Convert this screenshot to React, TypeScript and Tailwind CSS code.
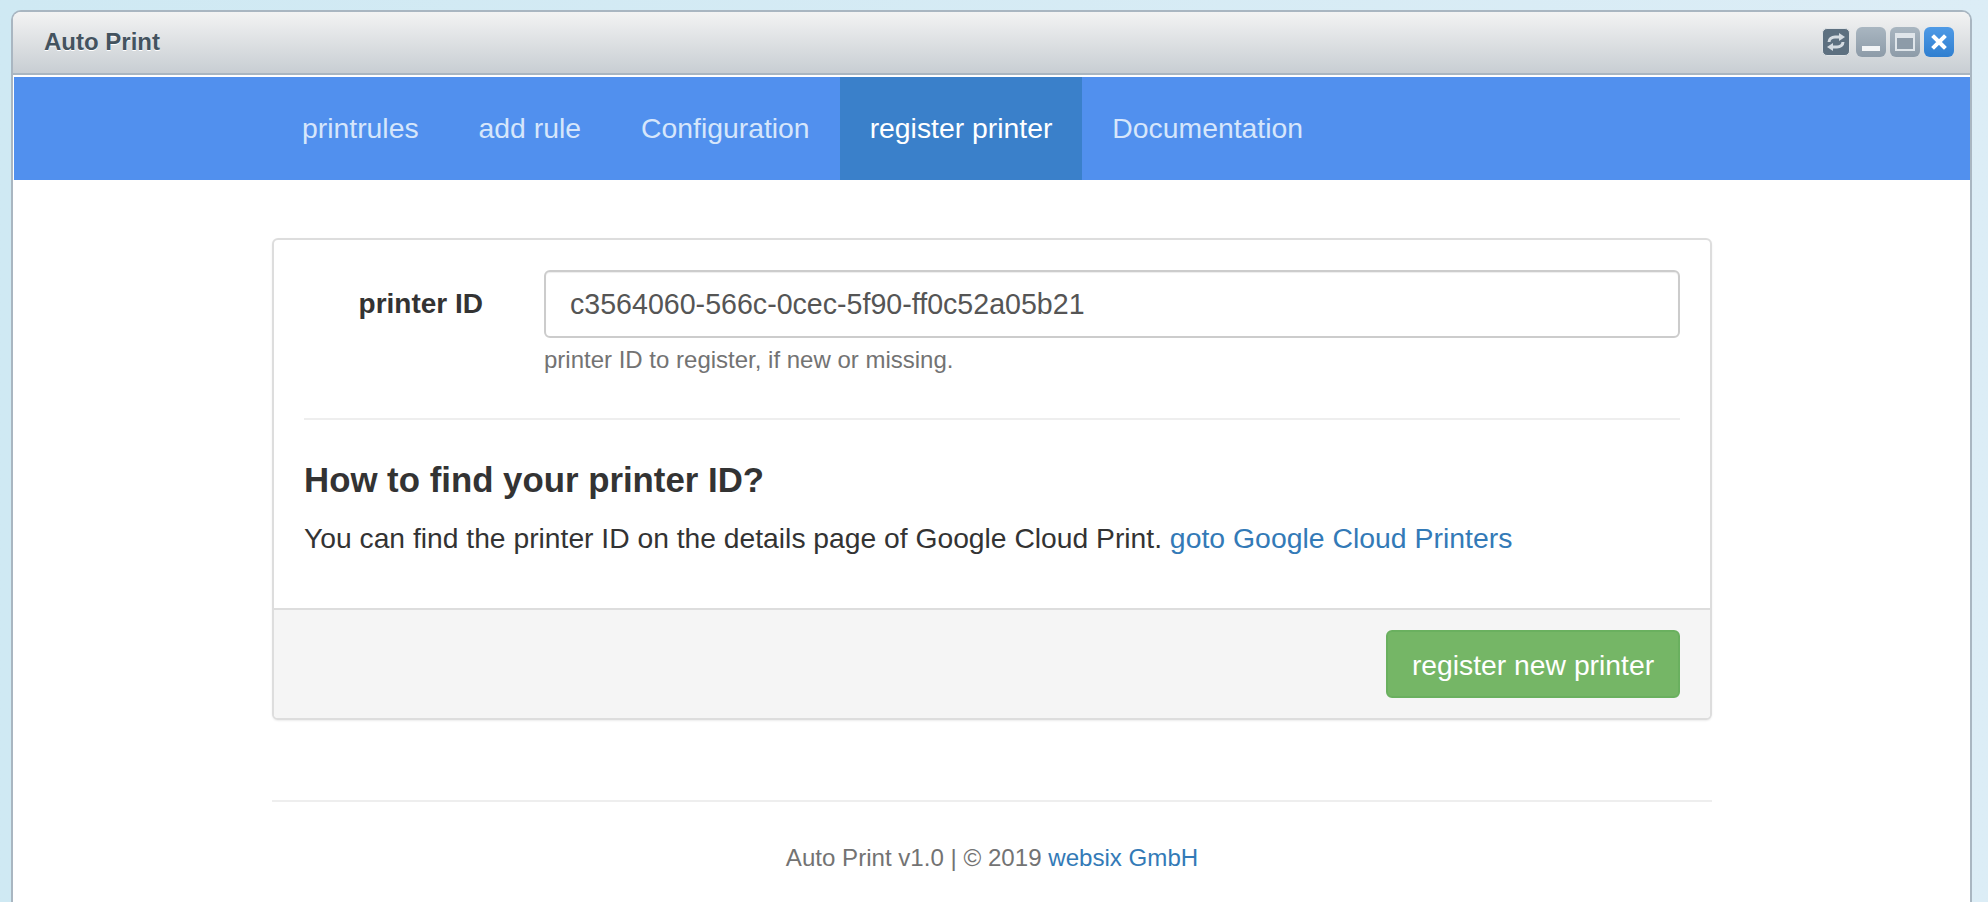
const sans = { fontFamily: '"Liberation Sans", Arial, sans-serif' };

const tabs = ["printrules", "add rule", "Configuration", "register printer", "Documentation"];

function Icons() {
  return (
    <div className="flex items-center gap-[4px]">
      <div className="mr-[2px] flex h-[28px] w-[28px] items-center justify-center rounded-[5px] border border-[#dfe3e6] bg-[#5d7080]">
        <svg width="22" height="22" viewBox="0 0 22 22" fill="none" stroke="#d5dce2" strokeWidth="3">
          <path d="M4 11 A6 5 0 0 1 10 6 H15" />
          <path d="M14 2 L20 6 L14 10 Z" fill="#d5dce2" stroke="none" />
          <path d="M18 11 A6 5 0 0 1 12 16 H7" />
          <path d="M8 12 L2 16 L8 20 Z" fill="#d5dce2" stroke="none" />
        </svg>
      </div>
      <div className="flex h-[30px] w-[30px] items-end justify-center rounded-[6px] bg-gradient-to-b from-[#a9b6c1] to-[#8d9ba8] pb-[6px]">
        <div className="h-[5px] w-[18px] bg-[#f2f4f6]" />
      </div>
      <div className="flex h-[30px] w-[30px] items-center justify-center rounded-[6px] bg-gradient-to-b from-[#a9b6c1] to-[#8d9ba8]">
        <div className="h-[18px] w-[20px] border-[2px] border-t-[5px] border-[#dfe5ea] bg-[#8d9ba8]" />
      </div>
      <div className="flex h-[30px] w-[30px] items-center justify-center rounded-[6px] bg-gradient-to-b from-[#4f9ae6] to-[#2f7fd0]">
        <svg width="18" height="18" viewBox="0 0 18 18" stroke="#fff" strokeWidth="4" strokeLinecap="square">
          <path d="M4 4 L14 14 M14 4 L4 14" />
        </svg>
      </div>
    </div>
  );
}

export default function App() {
  return (
    <div className="h-[902px] w-[1988px] overflow-hidden bg-gradient-to-r from-[#cfe9f3] to-[#dcedf6] pl-[11px] pr-[16px] pt-[10px]" style={sans}>
      <div className="flex h-[892px] flex-col overflow-hidden rounded-t-[10px] border-x-[2px] border-t-[2px] border-[#a9b6c1] bg-white">
        <header className="flex h-[63px] shrink-0 items-center justify-between border-b-[2px] border-[#a9b6c1] bg-gradient-to-b from-[#f3f3f3] to-[#c8ced3] pb-[2px] pl-[31px] pr-[16px]">
          <span className="text-[24px] font-bold text-[#44535f] [text-shadow:0_1px_0_#fff]">Auto Print</span>
          <Icons />
        </header>
        <div className="flex flex-1 flex-col pl-[1px] pt-[2px]">
          <nav className="flex h-[103px] shrink-0 bg-[#5190ee] pl-[258px]">
            {tabs.map((t) => (
              <a
                key={t}
                className={
                  "flex items-center px-[30px] text-[28.35px] " +
                  (t === "register printer" ? "bg-[#3a80ca] text-white" : "text-[#d6e6fb]")
                }
              >
                {t}
              </a>
            ))}
          </nav>
          <main className="mx-auto flex w-[1440px] flex-col pt-[58px]">
            <section className="flex h-[482px] flex-col overflow-hidden rounded-[6px] border-[2px] border-[#dddddd] bg-white shadow-[0_1px_2px_rgba(0,0,0,0.08)]">
              <div className="flex flex-1 flex-col px-[30px] pt-[30px]">
                <div className="flex">
                  <label className="w-[180px] pr-[1px] pt-[18px] text-right text-[28px] font-bold leading-[32px] text-[#333333]">
                    printer ID
                  </label>
                  <div className="ml-[60px] flex-1">
                    <div className="flex h-[68px] items-center rounded-[6px] border-[2px] border-[#cccccc] pl-[24px] text-[28.6px] text-[#555555] shadow-[inset_0_1px_1px_rgba(0,0,0,0.075)]">
                      c3564060-566c-0cec-5f90-ff0c52a05b21
                    </div>
                    <p className="mt-[6px] text-[24px] leading-[32px] text-[#737373]">
                      printer ID to register, if new or missing.
                    </p>
                  </div>
                </div>
                <div className="mt-[42px] border-t-[2px] border-[#eeeeee]" />
                <h4 className="mt-[40px] text-[34.8px] font-bold leading-[40px] text-[#333333]">How to find your printer ID?</h4>
                <p className="mt-[20px] text-[28.25px] leading-[36px] text-[#333333]">
                  You can find the printer ID on the details page of Google Cloud Print.{" "}
                  <a className="text-[28.4px] text-[#337ab7]">goto Google Cloud Printers</a>
                </p>
              </div>
              <div className="flex h-[110px] shrink-0 items-center justify-end border-t-[2px] border-[#dddddd] bg-[#f5f5f5] px-[30px]">
                <button className="h-[68px] w-[294px] rounded-[6px] border-[2px] border-[#6ab05f] bg-[#75b666] pt-[2px] text-[28.3px] text-white">
                  register new printer
                </button>
              </div>
            </section>
            <footer className="mt-[80px] border-t-[2px] border-[#eeeeee] pt-[40px] text-center text-[24.1px] leading-[32px] text-[#737373]">
              Auto Print v1.0 | © 2019 <a className="text-[#337ab7]">websix GmbH</a>
            </footer>
          </main>
        </div>
      </div>
    </div>
  );
}
